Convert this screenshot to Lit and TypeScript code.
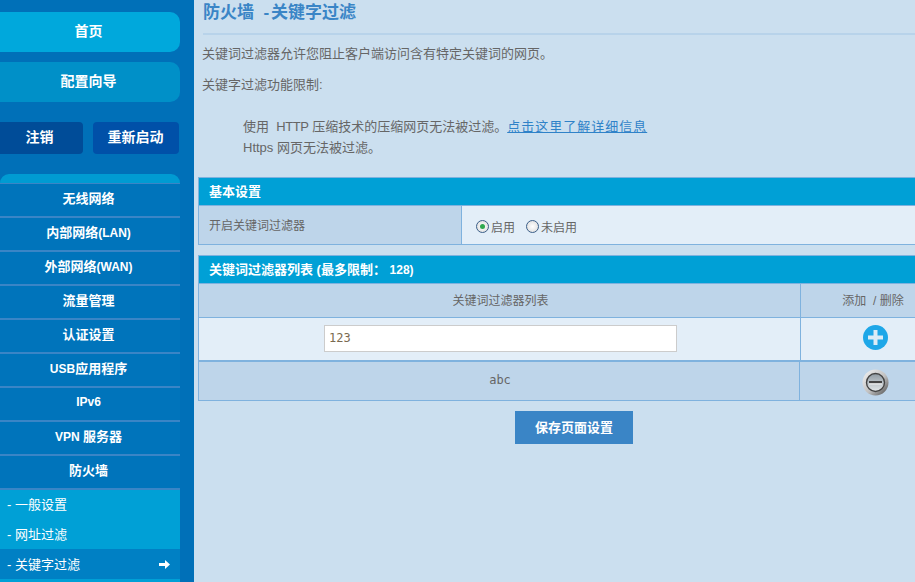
import { LitElement, html, css } from "lit";
import { customElement } from "lit/decorators.js";

@customElement("app-root")
export class AppRoot extends LitElement {
  static styles = css`
    :host { display: flex; width: 915px; height: 582px; overflow: hidden; background: #cbdfef; font-family: "Liberation Sans", Arial, "Noto Sans CJK SC", sans-serif; font-size: 12px; color: #666; }
    .side { width: 194px; flex: none; height: 582px; background: #0070b8; box-sizing: border-box; padding-top: 12px; overflow: hidden; }
    .inner { width: 180px; display: flex; flex-direction: column; }
    .big { height: 40px; box-sizing: border-box; padding: 0 3px 4px 0; border-radius: 0 10px 10px 0; color: #fff; font-weight: bold; font-size: 14px; display: flex; align-items: center; justify-content: center; margin-bottom: 10px; }
    .home { background: #00a8dc; }
    .wizard { background: #0090c8; }
    .pair { display: flex; gap: 10px; margin-top: 10px; margin-bottom: 20px; }
    .pair div { height: 32px; box-sizing: border-box; padding-bottom: 4px; color: #fff; font-weight: bold; font-size: 14px; display: flex; align-items: center; justify-content: center; border-radius: 4px; }
    .pair .logout { width: 83px; background: #004c98; border-radius: 0 4px 4px 0; padding-right: 4px; }
    .pair .reboot { width: 86px; background: #0050a8; padding-right: 1px; }
    .cap { height: 9px; background: #009bd2; border-radius: 10px 10px 0 0; }
    .row { height: 34px; box-sizing: border-box; background: #0074bb; border-bottom: 2px solid #3a85c6; color: #fff; font-weight: bold; font-size: 13px; display: flex; align-items: center; justify-content: center; padding: 0 3px 5px 0; white-space: pre; }
    .row.first { height: 35px; border-top: 1px solid #3a85c6; padding-bottom: 6px; }
    .lat { font-size: 12px; }
    .sub { height: 30px; background: #00a0d6; color: #fff; font-size: 13px; display: flex; align-items: center; padding: 0 0 2px 7px; box-sizing: border-box; }
    .sub.s1 { height: 29px; padding-bottom: 3px; }
    .sub.on { background: #0080c4; justify-content: space-between; padding-right: 10px; }
    .sub svg { margin-top: 2px; }
    .main { flex: 1; min-width: 0; padding-left: 4px; overflow: hidden; }
    h1 { margin: 0 0 0 5px; height: 33px; box-sizing: border-box; padding-top: 3px; font-size: 17px; font-weight: bold; color: #3a85c6; line-height: 20px; }
    h1 span { margin-left: 2px; }
    .rule { height: 2px; margin-left: 5px; background: #b8d3ea; }
    p { margin: 0 0 0 4px; font-size: 13px; line-height: 20px; }
    .p1 { margin-top: 9px; }
    .p2 { margin-top: 11px; }
    .indent { margin: 21px 0 0 45px; font-size: 13px; line-height: 21px; }
    .http { letter-spacing: -0.4px; }
    a { color: #2f82c8; text-decoration: underline; letter-spacing: 1px; }
    .panel { margin-top: 19px; border: 1px solid #7fb2de; border-right: 0; }
    .panel.second { margin-top: 10px; }
    .head { box-sizing: border-box; height: 28px; background: #00a0d6; color: #fff; font-weight: bold; font-size: 13px; display: flex; align-items: center; padding: 0 0 3px 10px; border-bottom: 1px solid #7fb2de; }
    .line { display: flex; }
    .on-row { height: 38px; }
    .on-row .a { width: 263px; flex: none; background: #bed5ea; border-right: 1px solid #7fb2de; padding: 10px 0 0 10px; box-sizing: border-box; }
    .on-row .b { flex: 1; background: #e3eef8; display: flex; align-items: center; padding: 2px 0 0 14px; }
    .radio { width: 13px; height: 13px; box-sizing: border-box; border-radius: 50%; border: 1px solid #3c5f88; background: radial-gradient(circle, #fff, #d8d8d8); display: inline-flex; align-items: center; justify-content: center; margin-right: 2px; }
    .radio.sel::after { content: ""; width: 5px; height: 5px; border-radius: 50%; background: #2fa84f; }
    .opt { display: flex; align-items: center; margin-right: 11px; }
    .th { height: 33px; background: #bed5ea; border-bottom: 1px solid #7fb2de; }
    .th .a, .in .a { flex: 1; display: flex; align-items: center; justify-content: center; box-sizing: border-box; }
    .th .a { padding: 0 0 3px 2px; }
    .th .b, .in .b { width: 115px; flex: none; border-left: 1px solid #7fb2de; display: flex; align-items: center; justify-content: center; box-sizing: border-box; }
    .th .b { padding: 0 0 2px 30px; white-space: nowrap; }
    .in { height: 42px; background: #e3eef8; border-bottom: 2px solid #7fb2de; }
    .in .a { padding: 0 0 2px 2px; }
    .in .b { padding: 0 0 3px 35px; }
    input { width: 353px; height: 27px; box-sizing: border-box; border: 1px solid #ccc; background: #fff; padding: 0 4px; margin: 0; font-family: "DejaVu Sans Mono", monospace; font-size: 12px; color: #7a6a50; outline: none; }
    .item { height: 38px; background: #bed5ea; }
    .item .a { flex: 1; display: flex; align-items: center; justify-content: center; font-family: "DejaVu Sans Mono", monospace; font-size: 12px; padding: 0 0 2px 2px; box-sizing: border-box; }
    .item .b { width: 116px; flex: none; border-left: 1px solid #7fb2de; display: flex; align-items: center; justify-content: center; box-sizing: border-box; padding: 3px 0 0 36px; }
    .save { margin: 10px 0 0 317px; width: 118px; height: 33px; box-sizing: border-box; padding-bottom: 3px; background: #3a85c6; color: #fff; font-weight: bold; font-size: 13px; display: flex; align-items: center; justify-content: center; }
  `;

  render() {
    const rows = [
      html`无线网络`,
      html`内部网络<span class="lat">(LAN)</span>`,
      html`外部网络<span class="lat">(WAN)</span>`,
      html`流量管理`,
      html`认证设置`,
      html`<span class="lat">USB</span>应用程序`,
      html`<span class="lat">IPv6</span>`,
      html`<span class="lat">VPN </span>服务器`,
      html`防火墙`,
    ];
    return html`
      <div class="side"><div class="inner">
        <div class="big home">首页</div>
        <div class="big wizard">配置向导</div>
        <div class="pair"><div class="logout">注销</div><div class="reboot">重新启动</div></div>
        <div class="cap"></div>
        ${rows.map((r, i) => html`<div class="row ${i === 0 ? "first" : ""}"><span>${r}</span></div>`)}
        <div class="sub s1">- 一般设置</div>
        <div class="sub">- 网址过滤</div>
        <div class="sub on"><span>- 关键字过滤</span>
          <svg width="11" height="9" viewBox="0 0 11 9"><path d="M0 3h6V0l5 4.5L6 9V6H0z" fill="#fff"/></svg>
        </div>
        <div class="sub"></div>
      </div></div>
      <div class="main">
        <h1>防火墙&nbsp; -<span>关键字过滤</span></h1>
        <div class="rule"></div>
        <p class="p1">关键词过滤器允许您阻止客户端访问含有特定关键词的网页。</p>
        <p class="p2">关键字过滤功能限制:</p>
        <div class="indent">使用&nbsp; <span class="http">HTTP</span> 压缩技术的压缩网页无法被过滤。<a>点击这里了解详细信息</a><br />Https 网页无法被过滤。</div>
        <div class="panel">
          <div class="head">基本设置</div>
          <div class="line on-row">
            <div class="a">开启关键词过滤器</div>
            <div class="b">
              <span class="opt"><span class="radio sel"></span>启用</span>
              <span class="opt"><span class="radio"></span>未启用</span>
            </div>
          </div>
        </div>
        <div class="panel second">
          <div class="head"><span>关键词过滤器列表 (最多限制： <span class="lat">128)</span></span></div>
          <div class="line th"><div class="a">关键词过滤器列表</div><div class="b">添加 &nbsp;/ 删除</div></div>
          <div class="line in"><div class="a"><input value="123" /></div>
            <div class="b"><svg width="25" height="25" viewBox="0 0 25 25"><circle cx="12.5" cy="12.5" r="12.5" fill="#1ea7e8"/><path d="M10.5 5h4v5.5H20v4h-5.5V20h-4v-5.5H5v-4h5.5z" fill="#dcecf6"/></svg></div>
          </div>
          <div class="line item"><div class="a">abc</div>
            <div class="b"><svg width="27" height="27" viewBox="0 0 27 27"><defs><linearGradient id="g" x1="0" y1="0" x2="1" y2="1"><stop offset="0" stop-color="#f6f6f6"/><stop offset=".55" stop-color="#c0c0c0"/><stop offset="1" stop-color="#4a4a4a"/></linearGradient><linearGradient id="h" x1="0" y1="0" x2="0" y2="1"><stop offset="0" stop-color="#8f9aa2"/><stop offset="1" stop-color="#e4e8ea"/></linearGradient></defs><circle cx="13.5" cy="13.5" r="13" fill="url(#g)"/><circle cx="13.5" cy="13.5" r="9" fill="url(#h)" stroke="#444" stroke-width="1.4"/><rect x="7" y="12" width="13" height="2.4" fill="#444"/><rect x="7" y="14.4" width="13" height="1" fill="#fff"/></svg></div>
          </div>
        </div>
        <div class="save">保存页面设置</div>
      </div>
    `;
  }
}
